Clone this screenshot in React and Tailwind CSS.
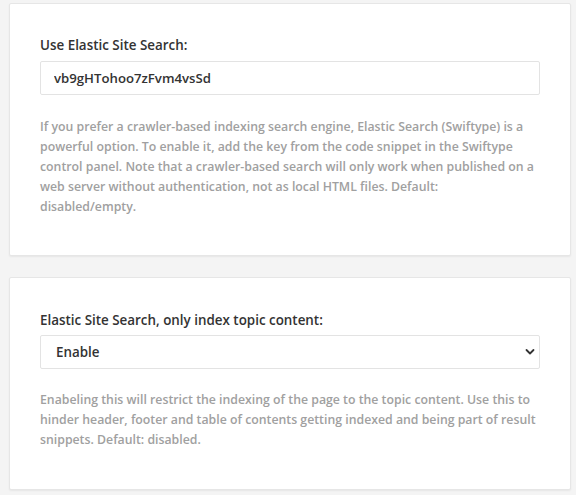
import { useState } from 'react';

export default function App() {
  const [siteKey, setSiteKey] = useState('vb9gHTohoo7zFvm4vsSd');
  const [topicOnly, setTopicOnly] = useState('enable');

  return (
    <div
      className="min-h-[495px] bg-[#f4f4f4] pl-[9px] pr-[5px] pt-[3px] pb-[4px]"
      style={{ fontFamily: '"Open Sans", "Noto Sans", sans-serif' }}
    >
      {/* Swiftype key */}
      <div className="bg-white border border-[#e6e6e6] rounded-[2px] shadow-[0_1px_2px_rgba(0,0,0,0.06)] px-[30px] pt-[31px] pb-[38px]">
        <label className="block text-[13.4px] leading-[20px] font-semibold text-[#333]">
          Use Elastic Site Search:
        </label>
        <input
          type="text"
          value={siteKey}
          onChange={(e) => setSiteKey(e.target.value)}
          className="mt-[6px] block w-full h-[34px] px-[13px] border border-[#e3e3e3] rounded-[2px] text-[13.2px] font-semibold text-[#333] focus:outline-none"
        />
        <p className="mt-[22px] -mr-[4px] text-[12.3px] leading-[20px] font-semibold text-[#a0a0a0]">
          If you prefer a crawler-based indexing search engine, Elastic Search (Swiftype) is a
          powerful option. To enable it, add the key from the code snippet in the Swiftype
          control panel. Note that a crawler-based search will only work when published on a
          web server without authentication, not as local HTML files. Default:
          <br />
          disabled/empty.
        </p>
      </div>

      {/* Topic content only */}
      <div className="mt-[21px] bg-white border border-[#e6e6e6] rounded-[2px] shadow-[0_1px_2px_rgba(0,0,0,0.06)] px-[30px] pt-[32px] pb-[39px]">
        <label className="block text-[13.4px] leading-[20px] font-semibold text-[#333]">
          Elastic Site Search, only index topic content:
        </label>
        <div className="relative mt-[5px]">
          <select
            value={topicOnly}
            onChange={(e) => setTopicOnly(e.target.value)}
            className="appearance-none block w-full h-[34px] pl-[15px] pr-8 border border-[#e3e3e3] rounded-[2px] bg-white text-[13.4px] font-semibold text-[#333] focus:outline-none"
          >
            <option value="enable">Enable</option>
            <option value="disable">Disable</option>
          </select>
          <svg
            className="pointer-events-none absolute right-[5px] top-1/2 -translate-y-1/2"
            width="10"
            height="7"
            viewBox="0 0 10 7"
            fill="none"
          >
            <path d="M1.5 1.5 L5 5 L8.5 1.5" stroke="#333" strokeWidth="1.8" strokeLinecap="round" strokeLinejoin="round" />
          </svg>
        </div>
        <p className="mt-[21px] -mr-[4px] text-[12.3px] leading-[20px] font-semibold text-[#a0a0a0]">
          Enabeling this will restrict the indexing of the page to the topic content. Use this to
          hinder header, footer and table of contents getting indexed and being part of result
          snippets. Default: disabled.
        </p>
      </div>
    </div>
  );
}
